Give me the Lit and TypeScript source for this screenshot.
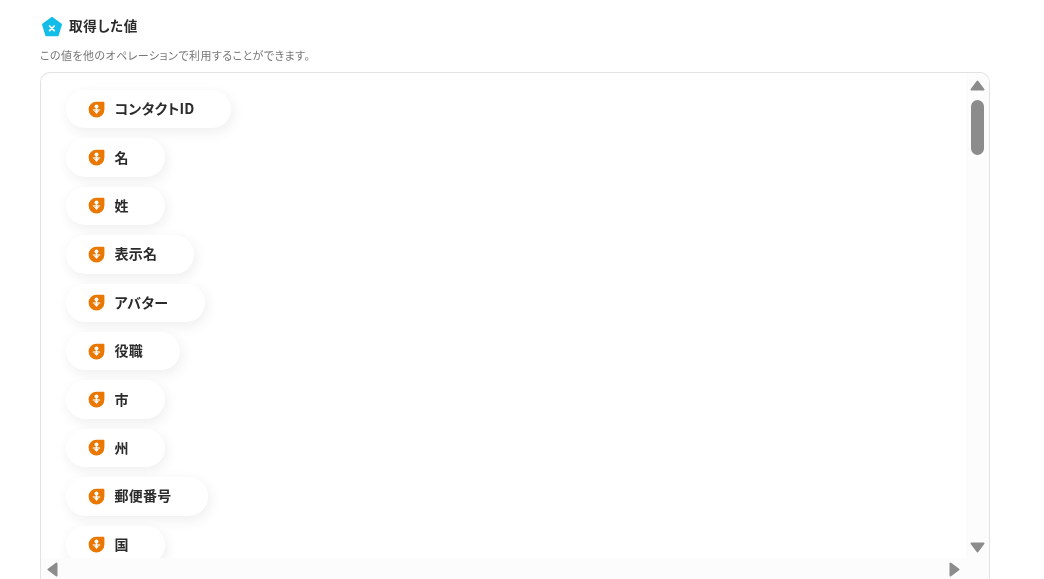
import { LitElement, html, css, svg } from "lit";
import { customElement } from "lit/decorators.js";

const items = [
  "コンタクトID", "名", "姓", "表示名", "アバター", "役職", "市", "州", "郵便番号", "国",
];

@customElement("app-root")
export class AppRoot extends LitElement {
  static styles = css`
    :host {
      display: block;
      width: 1044px;
      height: 579px;
      overflow: hidden;
      background: #fff;
      font-family: "Noto Sans CJK JP", "Noto Sans", sans-serif;
      font-feature-settings: "palt";
      color: #2b2b2b;
    }
    .page {
      box-sizing: border-box;
      padding: 16px 54px 0 40px;
      height: 579px;
      display: flex;
      flex-direction: column;
      will-change: transform;
    }
    .head {
      display: flex;
      align-items: center;
      gap: 6px;
      height: 22px;
      padding-left: 1px;
    }
    .head svg { width: 22px; height: 22px; display: block; }
    .title { font-size: 13.6px; font-weight: 700; line-height: 20px; letter-spacing: 0.05em; margin-top: -4px; }
    .desc {
      font-size: 11px;
      color: #777;
      line-height: 16px;
      margin-top: 9px;
      letter-spacing: 0.04em;
    }
    .box {
      position: relative;
      margin-top: 9px;
      flex: 1;
      border: 1px solid #e2e2e2;
      border-bottom: none;
      border-radius: 10px 10px 0 0;
      overflow: hidden;
    }
    .list {
      display: flex;
      flex-direction: column;
      align-items: flex-start;
      gap: 10px;
      padding: 17px 0 0 25px;
    }
    .pill {
      display: flex;
      align-items: center;
      gap: 10px;
      height: 38.4px;
      padding: 0 36.5px 0 21.5px;
      background: #fff;
      border-radius: 20px;
      box-shadow: 2px 4px 14px rgba(0, 0, 0, 0.07);
      font-size: 14px;
      font-weight: 700;
      letter-spacing: 0.02em;
      white-space: nowrap;
    }
    .pill svg { width: 17px; height: 17px; flex: none; display: block; }
    .pill span { line-height: 20px; margin-top: -2px; }
    .vbar {
      position: absolute;
      top: 0;
      right: 0;
      bottom: 21px;
      width: 23px;
      background: #fcfcfc;
    }
    .hbar {
      position: absolute;
      left: 0;
      right: 0;
      bottom: 0;
      height: 21px;
      background: #fcfcfc;
    }
    .thumb {
      position: absolute;
      top: 27px;
      left: 5px;
      width: 13px;
      height: 55px;
      border-radius: 7px;
      background: #8c8c8c;
    }
    .arrow { position: absolute; display: block; fill: #8c8c8c; stroke: #8c8c8c; stroke-width: 2; stroke-linejoin: round; }
    .up { top: 7px; left: 4px; width: 15px; height: 11px; }
    .down { bottom: 5px; left: 4px; width: 15px; height: 11px; }
    .left { top: 4px; left: 6px; width: 11px; height: 15px; }
    .right { top: 4px; right: 29px; width: 11px; height: 15px; }
  `;

  private tag() {
    return svg`<svg viewBox="0 0 17 17" aria-hidden="true">
      <path d="M8.5 .7H15.4a1 1 0 0 1 1 1V8.6A7.9 7.9 0 1 1 8.5 .7Z" fill="#e97700"/>
      <circle cx="8.5" cy="5.6" r="2" fill="#fff"/>
      <rect x="4.8" y="8.4" width="7.4" height="1.2" fill="#fff"/>
      <path d="M6.1 10.1h4.8L8.5 13z" fill="#fff"/>
      <rect x="7.8" y="7" width="1.4" height="3.4" fill="#fff"/>
    </svg>`;
  }

  render() {
    return html`
      <div class="page">
        <div class="head">
          <svg viewBox="0 0 22 22" aria-hidden="true">
            <path d="M11 1.6 20.2 8.4 16.8 19.4H5.2L1.8 8.4Z" fill="#12bde8" stroke="#12bde8" stroke-width="1.6" stroke-linejoin="round"/>
            <path d="M8.6 10 13.2 14.6M13.2 10 8.6 14.6" stroke="#fff" stroke-width="1.7" stroke-linecap="round"/>
          </svg>
          <div class="title">取得した値</div>
        </div>
        <div class="desc">この値を他のオペレーションで利用することができます。</div>
        <div class="box">
          <div class="list">
            ${items.map((t) => html`<div class="pill">${this.tag()}<span>${t}</span></div>`)}
          </div>
          <div class="vbar">
            <svg class="arrow up" viewBox="0 0 15 11"><path d="M7.5 1.5 13.5 9.5H1.5Z"/></svg>
            <div class="thumb"></div>
            <svg class="arrow down" viewBox="0 0 15 11"><path d="M1.5 1.5H13.5L7.5 9.5Z"/></svg>
          </div>
          <div class="hbar">
            <svg class="arrow left" viewBox="0 0 11 15"><path d="M9.5 1.5V13.5L1.5 7.5Z"/></svg>
            <svg class="arrow right" viewBox="0 0 11 15"><path d="M1.5 1.5V13.5L9.5 7.5Z"/></svg>
          </div>
        </div>
      </div>
    `;
  }
}
